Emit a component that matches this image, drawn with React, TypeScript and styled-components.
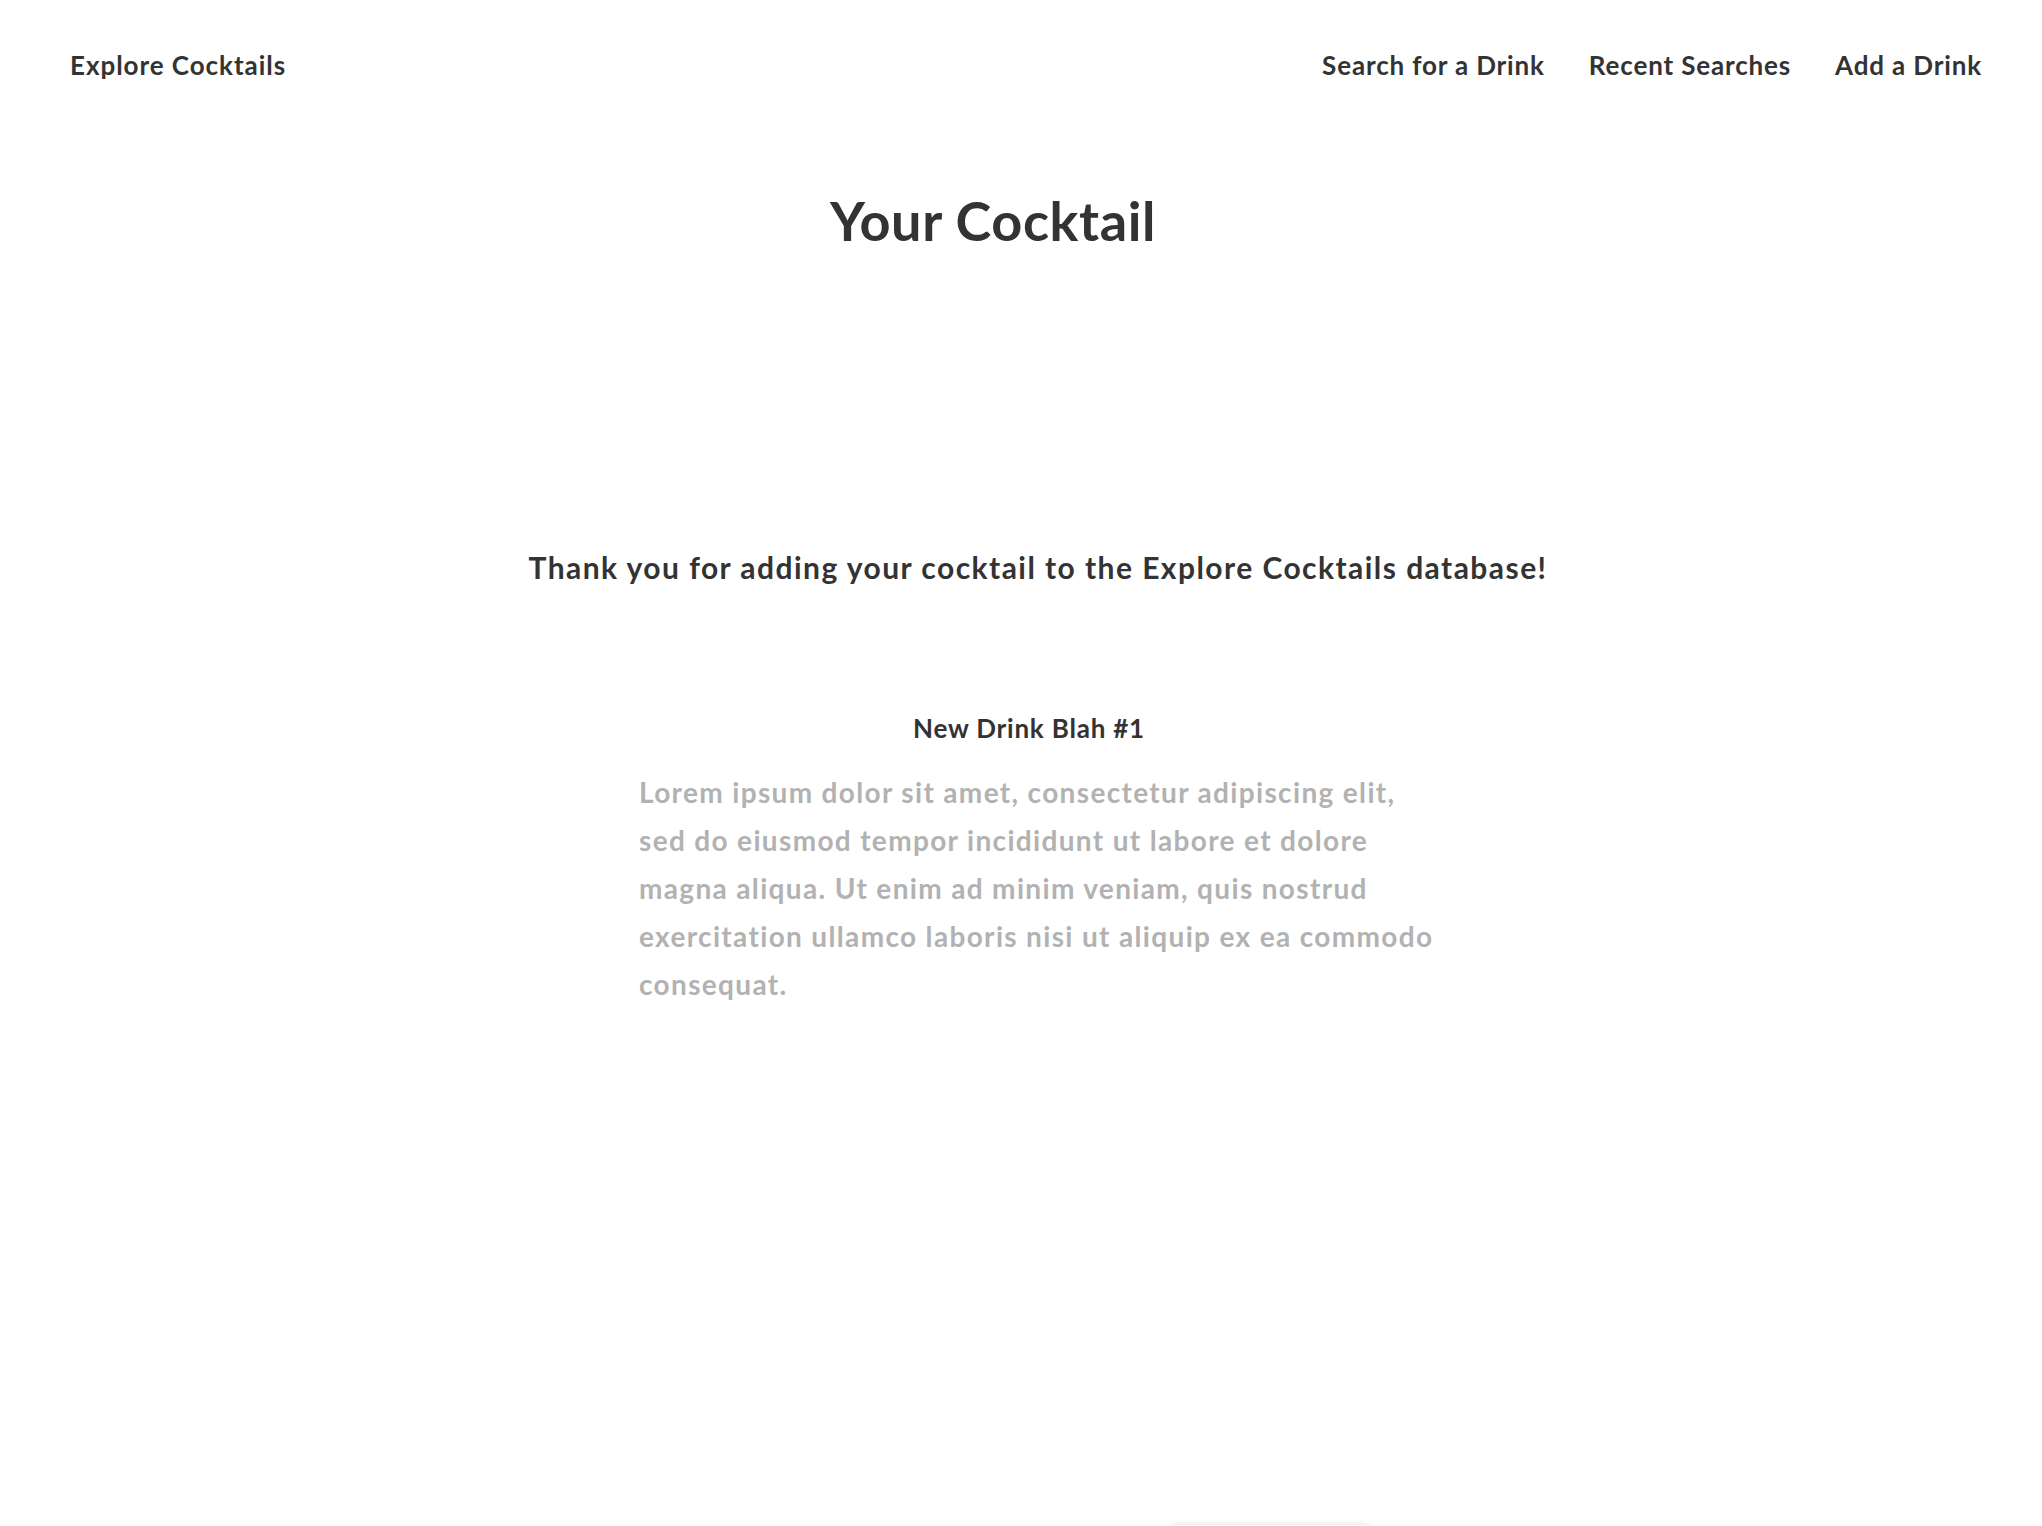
import React from "react";
import styled, { createGlobalStyle } from "styled-components";

const GlobalStyle = createGlobalStyle`
  html, body {
    margin: 0;
    padding: 0;
    background: #ffffff;
  }
  body {
    font-family: Lato, "Open Sans", "Liberation Sans", sans-serif;
    color: #333333;
    -webkit-font-smoothing: antialiased;
  }
`;

const Page = styled.div`
  width: 100%;
  min-height: 1526px;
  display: flex;
  flex-direction: column;
`;

const Header = styled.header`
  height: 130px;
  display: flex;
  align-items: center;
  justify-content: space-between;
  padding: 0 60px 0 70px;
  box-sizing: border-box;
`;

const Brand = styled.a`
  font-size: 26px;
  font-weight: 700;
  letter-spacing: 0.95px;
  color: #333333;
  text-decoration: none;
`;

const Nav = styled.nav`
  display: flex;
  align-items: center;
  gap: 44px;
`;

const NavLink = styled.a`
  font-size: 26px;
  font-weight: 700;
  letter-spacing: 0.85px;
  color: #333333;
  text-decoration: none;
`;

const Main = styled.main`
  display: flex;
  flex-direction: column;
  align-items: center;
`;

const Title = styled.h1<{ $shift: number }>`
  margin: 58px 0 0;
  font-size: 54px;
  line-height: 65px;
  font-weight: 700;
  letter-spacing: 0.6px;
  color: #333333;
  transform: translateX(${(p) => p.$shift}px);
`;

const Thanks = styled.h2<{ $shift: number }>`
  margin: 297px 0 0;
  font-size: 30px;
  line-height: 34px;
  font-weight: 700;
  letter-spacing: 1.45px;
  color: #333333;
  transform: translateX(${(p) => p.$shift}px);
`;

const Card = styled.section`
  width: 840px;
  margin: 129px 0 0 16px;
  display: flex;
  flex-direction: column;
  align-items: center;
`;

const DrinkName = styled.h3`
  margin: 0;
  font-size: 26px;
  line-height: 30px;
  font-weight: 700;
  letter-spacing: 0.8px;
  color: #333333;
`;

const Description = styled.p`
  margin: 25px 0 0;
  align-self: stretch;
  padding-left: 30px;
  white-space: nowrap;
  font-size: 28px;
  line-height: 48px;
  font-weight: 700;
  letter-spacing: 1.34px;
  color: #b2b2b2;
`;

const Footer = styled.div`
  display: flex;
  justify-content: flex-start;
  padding-left: 1172px;
  margin-top: 517px;
`;

const GhostButton = styled.button`
  width: 196px;
  height: 60px;
  border: none;
  border-radius: 4px;
  background: #ffffff;
  box-shadow: 0 0 6px rgba(0, 0, 0, 0.15);
`;

export default function App() {
  return (
    <Page>
      <GlobalStyle />
      <Header>
        <Brand href="#">Explore Cocktails</Brand>
        <Nav>
          <NavLink href="#">Search for a Drink</NavLink>
          <NavLink href="#">Recent Searches</NavLink>
          <NavLink href="#">Add a Drink</NavLink>
        </Nav>
      </Header>
      <Main>
        <Title $shift={-28}>Your Cocktail</Title>
        <Thanks $shift={17}>
          Thank you for adding your cocktail to the Explore Cocktails database!
        </Thanks>
        <Card>
          <DrinkName>New Drink Blah #1</DrinkName>
          <Description>
            Lorem ipsum dolor sit amet, consectetur adipiscing elit,
            <br />
            sed do eiusmod tempor incididunt ut labore et dolore
            <br />
            magna aliqua. Ut enim ad minim veniam, quis nostrud
            <br />
            exercitation ullamco laboris nisi ut aliquip ex ea commodo
            <br />
            consequat.
          </Description>
        </Card>
      </Main>
      <Footer>
        <GhostButton aria-label="continue" />
      </Footer>
    </Page>
  );
}
